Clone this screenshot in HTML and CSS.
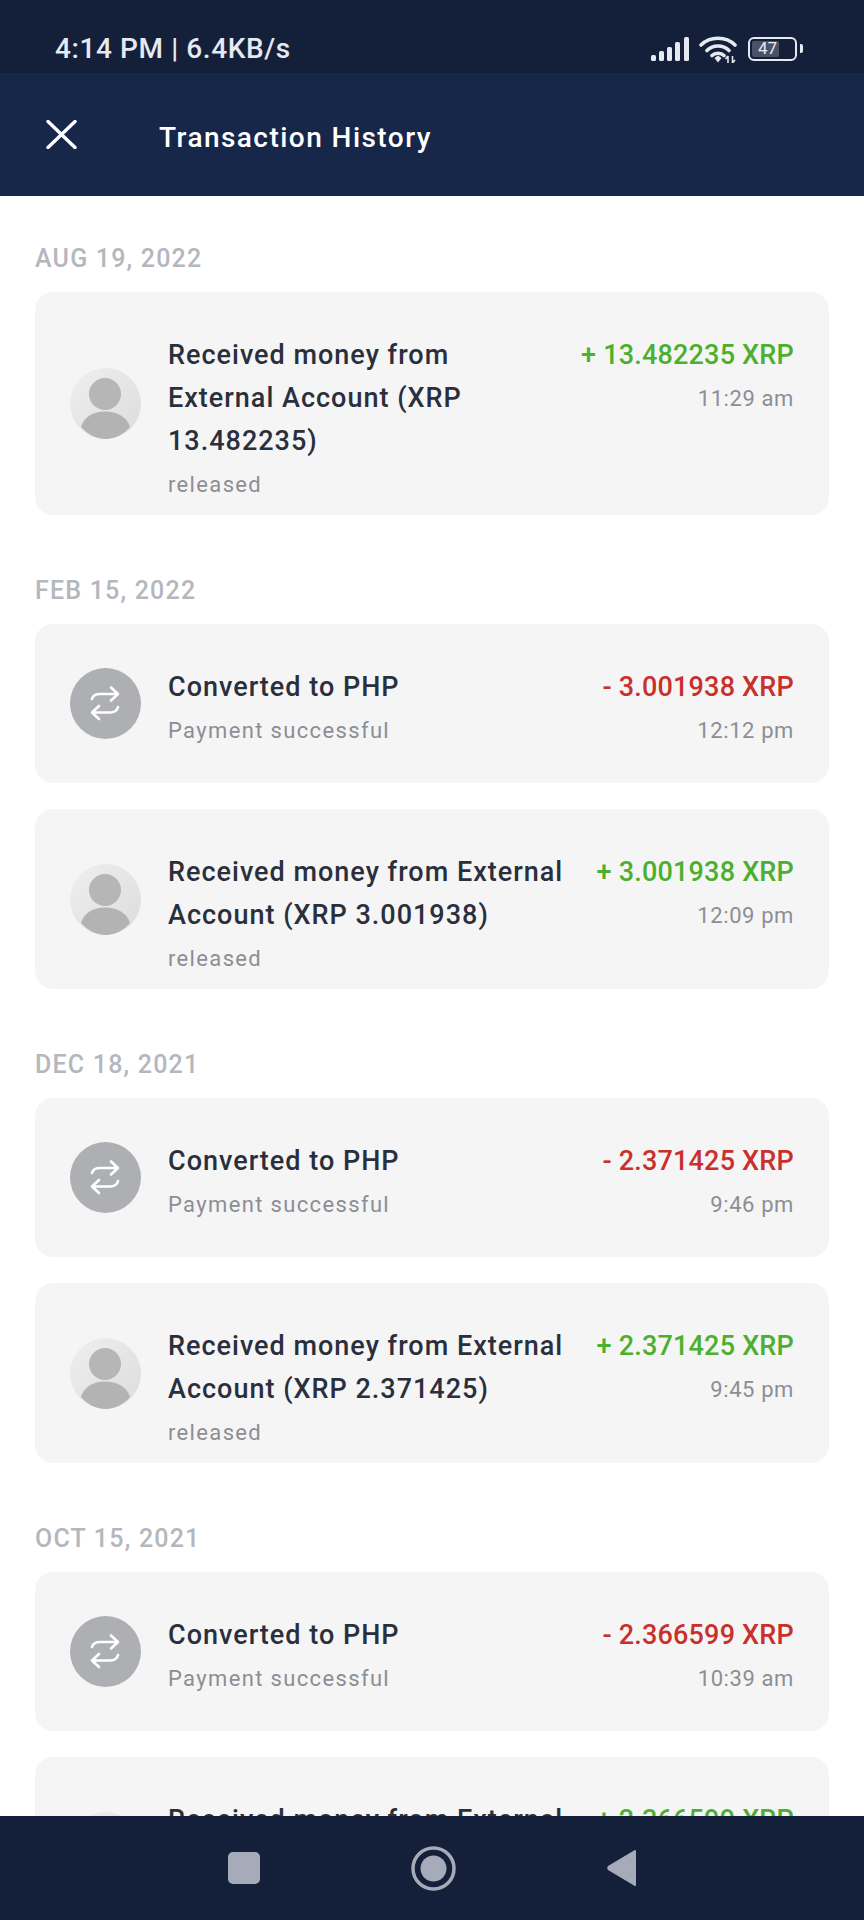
FILE: index.html
```html
<!DOCTYPE html>
<html>
<head>
    <title>Transaction History</title>
    <link rel="stylesheet" href="styles.css">
</head>
<body>
    <svg class="defs" width="0" height="0">
        <symbol id="icon-person" viewBox="0 0 71 71">
            <defs>
                <linearGradient id="person-bg" x1="0" y1="0" x2="1" y2="1">
                    <stop offset="0" stop-color="#efefef"/>
                    <stop offset="1" stop-color="#dcdcdc"/>
                </linearGradient>
            </defs>
            <circle cx="35.5" cy="35.5" r="35.5" fill="url(#person-bg)"/>
            <circle cx="35" cy="26" r="16" fill="#b6b6b6"/>
            <path d="M11 59 C14 49 23 43.500 35 43.500 C47 43.500 57 49 60 59 C54 66 45 71 35.5 71 C26 71 17 66 11 59 Z" fill="#b3b3b3"/>
        </symbol>
        <symbol id="icon-swap" viewBox="0 0 71 71">
            <circle cx="35.5" cy="35.5" r="35.5" fill="#aeafb3"/>
            <path d="M22 31 C23 27.500 26 26 30 26 H48 M41 19.500 L48 26 L41 32.500 M48 39 C47 43 44 44.500 40 44.500 H22 M29 38 L22 44.500 L29 51" fill="none" stroke="#fff" stroke-width="2.600" stroke-linecap="round" stroke-linejoin="round"/>
        </symbol>
    </svg>

    <div class="status-bar">
        <span class="status-text">4:14 PM | 6.4KB/s</span>
        <div class="status-icons">
            <svg class="icon-signal" width="38" height="24" viewBox="0 0 38 24">
                <rect x="0" y="18" width="5" height="6" rx="1.500"/>
                <rect x="8" y="14" width="5" height="10" rx="1.500"/>
                <rect x="16" y="10" width="5" height="14" rx="1.500"/>
                <rect x="24" y="5" width="5" height="19" rx="1.500"/>
                <rect x="33" y="0" width="5" height="24" rx="1.500"/>
            </svg>
            <svg class="icon-wifi" width="39" height="28" viewBox="0 0 39 28">
                <path d="M2 10 C11 1 27 1 36 10 M8 15.500 C14 9.500 24 9.500 30 15.500 M13 20.500 C16 17.500 22 17.500 25 20.500" fill="none" stroke="#e6e9f0" stroke-width="3.600" stroke-linecap="round"/>
                <path d="M15.500 23 L19 20.500 L22.500 23 L19 27.500 Z" fill="#e6e9f0"/>
                <path d="M29 21 V28 M29 21 L26.500 24 M33.500 28 V21 M33.500 28 L36 25" fill="none" stroke="#e6e9f0" stroke-width="1.600"/>
            </svg>
            <div class="battery">
                <div class="battery-body">
                    <div class="battery-fill"></div>
                    <span class="battery-level">47</span>
                </div>
                <div class="battery-tip"></div>
            </div>
        </div>
    </div>

    <div class="header">
        <svg class="icon-close" width="31" height="29" viewBox="0 0 31 29">
            <path d="M2 1.500 L29 27.500 M29 1.500 L2 27.500" fill="none" stroke="#fff" stroke-width="3.400" stroke-linecap="round"/>
        </svg>
        <h1>Transaction History</h1>
    </div>

    <div class="history">
        <div class="date">AUG 19, 2022</div>
        <div class="card">
            <svg class="avatar"><use href="#icon-person"/></svg>
            <div class="info">
                <div class="title">Received money from External Account (XRP 13.482235)</div>
                <div class="sub">released</div>
            </div>
            <div class="side">
                <div class="amount plus">+ 13.482235 XRP</div>
                <div class="sub">11:29 am</div>
            </div>
        </div>

        <div class="date">FEB 15, 2022</div>
        <div class="card">
            <svg class="avatar"><use href="#icon-swap"/></svg>
            <div class="info">
                <div class="title">Converted to PHP</div>
                <div class="sub">Payment successful</div>
            </div>
            <div class="side">
                <div class="amount minus">- 3.001938 XRP</div>
                <div class="sub">12:12 pm</div>
            </div>
        </div>
        <div class="card">
            <svg class="avatar"><use href="#icon-person"/></svg>
            <div class="info">
                <div class="title">Received money from External Account (XRP 3.001938)</div>
                <div class="sub">released</div>
            </div>
            <div class="side">
                <div class="amount plus">+ 3.001938 XRP</div>
                <div class="sub">12:09 pm</div>
            </div>
        </div>

        <div class="date">DEC 18, 2021</div>
        <div class="card">
            <svg class="avatar"><use href="#icon-swap"/></svg>
            <div class="info">
                <div class="title">Converted to PHP</div>
                <div class="sub">Payment successful</div>
            </div>
            <div class="side">
                <div class="amount minus">- 2.371425 XRP</div>
                <div class="sub">9:46 pm</div>
            </div>
        </div>
        <div class="card">
            <svg class="avatar"><use href="#icon-person"/></svg>
            <div class="info">
                <div class="title">Received money from External Account (XRP 2.371425)</div>
                <div class="sub">released</div>
            </div>
            <div class="side">
                <div class="amount plus">+ 2.371425 XRP</div>
                <div class="sub">9:45 pm</div>
            </div>
        </div>

        <div class="date">OCT 15, 2021</div>
        <div class="card">
            <svg class="avatar"><use href="#icon-swap"/></svg>
            <div class="info">
                <div class="title">Converted to PHP</div>
                <div class="sub">Payment successful</div>
            </div>
            <div class="side">
                <div class="amount minus">- 2.366599 XRP</div>
                <div class="sub">10:39 am</div>
            </div>
        </div>
        <div class="card">
            <svg class="avatar"><use href="#icon-person"/></svg>
            <div class="info">
                <div class="title">Received money from External Account (XRP 2.366599)</div>
                <div class="sub">released</div>
            </div>
            <div class="side">
                <div class="amount plus">+ 2.366599 XRP</div>
                <div class="sub">10:36 am</div>
            </div>
        </div>
    </div>

    <div class="nav-bar">
        <svg width="32" height="32" viewBox="0 0 32 32">
            <rect width="32" height="32" rx="5" fill="#a5abb8"/>
        </svg>
        <svg width="45" height="45" viewBox="0 0 45 45">
            <circle cx="22.500" cy="22.500" r="20.500" fill="none" stroke="#a5abb8" stroke-width="3.500"/>
            <circle cx="22.500" cy="22.500" r="13" fill="#a5abb8"/>
        </svg>
        <svg width="29" height="38" viewBox="0 0 29 38">
            <path d="M28 1 C28.500 1 29 1.500 29 2 V36 C29 37 28 37.500 27 36.500 L1 21 C0 20 0 18 1 17 L27 1.500 Z" fill="#a5abb8"/>
        </svg>
    </div>
</body>
</html>
```

FILE: styles.css
```css
* {
    box-sizing: border-box;
}
html, body {
    height: 100%;
}
body {
    margin: 0;
    display: flex;
    flex-direction: column;
    height: 1920px;
    overflow: hidden;
    background-color: #fff;
    font-family: Roboto, "Liberation Sans", sans-serif;
}
.defs {
    position: absolute;
}

/* status bar */
.status-bar {
    flex: none;
    height: 73px;
    display: flex;
    align-items: center;
    justify-content: space-between;
    padding: 24px 61px 0 55px;
    background-color: #141f3a;
    color: #e6e9f0;
}
.status-text {
    font-size: 28px;
    font-weight: 500;
    letter-spacing: 0.6px;
}
.status-icons {
    display: flex;
    align-items: center;
    gap: 10px;
}
.icon-signal {
    fill: #e6e9f0;
}
.battery {
    display: flex;
    align-items: center;
    gap: 3px;
}
.battery-body {
    position: relative;
    width: 49px;
    height: 24px;
    border: 2.500px solid #e6e9f0;
    border-radius: 6px;
    display: flex;
    align-items: center;
    padding-left: 8px;
}
.battery-fill {
    position: absolute;
    left: 2px;
    top: 2px;
    bottom: 2px;
    width: 27px;
    border-radius: 2px;
    background-color: #4a5268;
}
.battery-level {
    position: relative;
    font-size: 17px;
    line-height: 1;
}
.battery-tip {
    width: 3px;
    height: 9px;
    border-radius: 0 2px 2px 0;
    background-color: #e6e9f0;
}

/* header */
.header {
    flex: none;
    height: 123px;
    display: flex;
    align-items: center;
    gap: 82px;
    padding: 0 46px;
    background-color: #16274a;
}
.header h1 {
    margin: 5px 0 0;
    font-size: 28px;
    font-weight: 500;
    letter-spacing: 1.45px;
    color: #fff;
}

/* list */
.history {
    flex: 1;
    min-height: 0;
    overflow: hidden;
    padding: 44px 35px 0;
}
.date {
    height: 34px;
    line-height: 34px;
    margin: 57px 0 18px;
    padding-top: 2px;
    font-size: 25px;
    font-weight: 500;
    letter-spacing: 1.2px;
    color: #b4b7bd;
}
.date:first-child {
    margin-top: 0;
}
.card {
    display: flex;
    align-items: center;
    min-height: 159px;
    margin-bottom: 26px;
    padding: 0 35px;
    border-radius: 18px;
    background-color: #f5f5f6;
}
.card:has(+ .date) {
    margin-bottom: 0;
}
.avatar {
    flex: none;
    width: 71px;
    height: 71px;
    margin-right: 27px;
}
.info {
    flex: 1;
    align-self: flex-start;
    min-width: 0;
    padding: 42px 0 15px;
}
.title {
    font-size: 27px;
    font-weight: 500;
    line-height: 43px;
    letter-spacing: 1px;
    color: #2a2f3c;
}
.sub {
    margin-top: 7px;
    font-size: 22px;
    line-height: 30px;
    letter-spacing: 1.35px;
    color: #8c8e94;
}
.side {
    flex: none;
    align-self: flex-start;
    padding: 42px 0 0 20px;
    text-align: right;
}
.side .sub {
    letter-spacing: 0.6px;
}
.amount {
    font-size: 27px;
    font-weight: 500;
    line-height: 43px;
    letter-spacing: 0.2px;
}
.plus {
    color: #4caf2d;
}
.minus {
    color: #c9302c;
}

/* bottom nav */
.nav-bar {
    flex: none;
    height: 104px;
    display: flex;
    align-items: center;
    justify-content: center;
    gap: 151px;
    background-color: #141f3a;
}
```
